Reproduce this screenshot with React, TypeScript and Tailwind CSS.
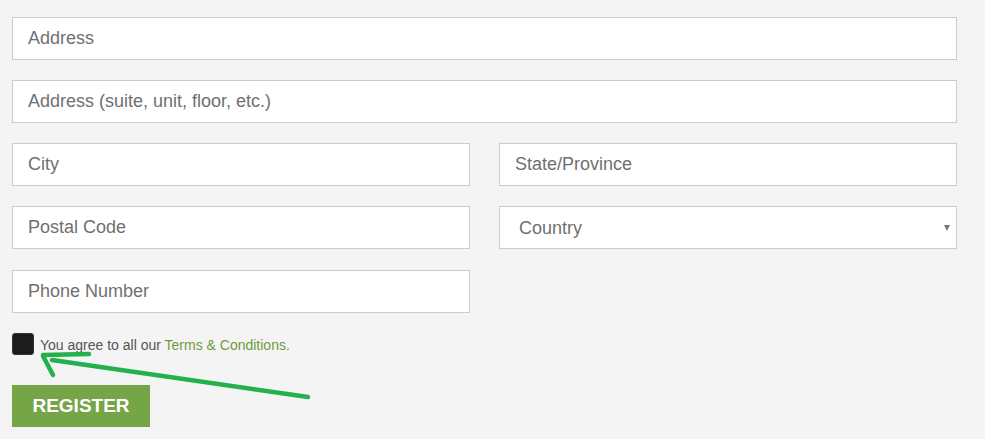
import React from "react";

const inputCls =
  "h-[43px] w-full border border-[#cccccc] bg-white pl-[15px] text-[18px] text-[#555] placeholder:text-[#707070] outline-none";

function Field({ placeholder }: { placeholder: string }) {
  return <input type="text" placeholder={placeholder} className={inputCls} />;
}

export default function App() {
  return (
    <div
      className="relative min-h-[439px] w-full bg-[#f4f4f4]"
      style={{ fontFamily: '"Liberation Sans", Arial, sans-serif' }}
    >
      <div className="flex w-[969px] flex-col px-3 pt-[17px]">
        <div className="flex flex-col gap-5">
          <Field placeholder="Address" />
          <Field placeholder="Address (suite, unit, floor, etc.)" />
          <div className="grid grid-cols-2 gap-x-[29px] gap-y-5">
            <Field placeholder="City" />
            <Field placeholder="State/Province" />
            <Field placeholder="Postal Code" />
            <div className="relative">
              <select
                defaultValue=""
                className="h-[43px] w-full appearance-none border border-[#cccccc] bg-white pl-[19px] pt-[2px] text-[18px] text-[#707070] outline-none"
              >
                <option value="" disabled>
                  Country
                </option>
              </select>
              <svg
                className="pointer-events-none absolute right-[7px] top-[19px]"
                width="6"
                height="6"
                viewBox="0 0 6 6"
              >
                <path d="M0 0H6L3 6Z" fill="#777" />
              </svg>
            </div>
          </div>
        </div>
        <div className="mt-[21px] w-[458px]">
          <Field placeholder="Phone Number" />
        </div>
        <label className="mt-5 flex h-[22px] items-center gap-[6px] text-[14px] text-[#555]">
          <span className="block h-[22px] w-[22px] rounded-[3px] border border-[#333] bg-[#1c1c1c]" />
          <span className="pt-[2px] leading-[18px]">
            You agree to all our{" "}
            <a className="text-[#6f9a3c]">Terms &amp; Conditions.</a>
          </span>
        </label>
        <button className="mt-[30px] h-[42px] w-[138px] bg-[#75a547] text-[19px] font-bold text-white">
          REGISTER
        </button>
      </div>

      <svg
        className="pointer-events-none absolute left-0 top-0"
        width="985"
        height="439"
        viewBox="0 0 985 439"
      >
        <g stroke="#22b14c" strokeWidth="4.5" strokeLinecap="round" fill="none">
          <path d="M52 360 L308 397" />
          <path d="M43 355 L89 354" />
          <path d="M43 356 L53 375" />
        </g>
      </svg>
    </div>
  );
}
